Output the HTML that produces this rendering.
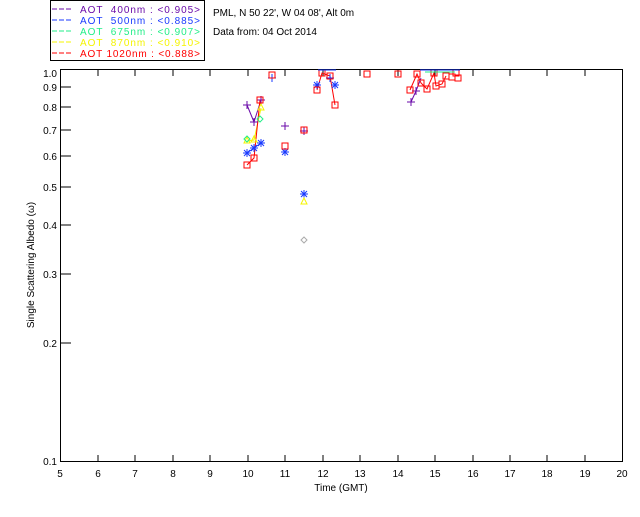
<!DOCTYPE html>
<html><head><meta charset="utf-8"><style>
html,body{margin:0;padding:0;background:#fff;}
svg text{font-family:"Liberation Sans",sans-serif;font-size:10px;}
</style></head><body>
<svg width="640" height="512" viewBox="0 0 640 512" xmlns="http://www.w3.org/2000/svg">
<rect width="640" height="512" fill="#fff"/>
<rect x="50.5" y="0.5" width="154" height="60" fill="none" stroke="#000"/>
<g font-size="10">
<line x1="52" y1="9" x2="73" y2="9" stroke="#6a0aa8" stroke-dasharray="5,2"/>
<text x="80" y="13" fill="#6a0aa8" xml:space="preserve" textLength="120">AOT  400nm : &lt;0.905&gt;</text>
<line x1="52" y1="20" x2="73" y2="20" stroke="#1a3aff" stroke-dasharray="5,2"/>
<text x="80" y="24" fill="#1a3aff" xml:space="preserve" textLength="120">AOT  500nm : &lt;0.885&gt;</text>
<line x1="52" y1="31" x2="73" y2="31" stroke="#22ee88" stroke-dasharray="5,2"/>
<text x="80" y="35" fill="#22ee88" xml:space="preserve" textLength="120">AOT  675nm : &lt;0.907&gt;</text>
<line x1="52" y1="42" x2="73" y2="42" stroke="#f4f400" stroke-dasharray="5,2"/>
<text x="80" y="46" fill="#f4f400" xml:space="preserve" textLength="120">AOT  870nm : &lt;0.910&gt;</text>
<line x1="52" y1="53" x2="73" y2="53" stroke="#f00" stroke-dasharray="5,2"/>
<text x="80" y="57" fill="#f00" xml:space="preserve" textLength="120">AOT 1020nm : &lt;0.888&gt;</text>
</g>
<text x="213" y="16">PML, N 50 22', W 04 08', Alt 0m</text>
<text x="213" y="35">Data from: 04 Oct 2014</text>
<rect x="60.5" y="69.5" width="562" height="392" fill="none" stroke="#000"/>
<g stroke="#000">
<line x1="98" y1="461" x2="98" y2="455"/><line x1="135" y1="461" x2="135" y2="455"/><line x1="173" y1="461" x2="173" y2="455"/><line x1="210" y1="461" x2="210" y2="455"/><line x1="248" y1="461" x2="248" y2="455"/><line x1="285" y1="461" x2="285" y2="455"/><line x1="323" y1="461" x2="323" y2="455"/><line x1="360" y1="461" x2="360" y2="455"/><line x1="398" y1="461" x2="398" y2="455"/><line x1="435" y1="461" x2="435" y2="455"/><line x1="473" y1="461" x2="473" y2="455"/><line x1="510" y1="461" x2="510" y2="455"/><line x1="547" y1="461" x2="547" y2="455"/><line x1="585" y1="461" x2="585" y2="455"/>
<line x1="98" y1="70" x2="98" y2="76"/><line x1="135" y1="70" x2="135" y2="76"/><line x1="173" y1="70" x2="173" y2="76"/><line x1="210" y1="70" x2="210" y2="76"/><line x1="248" y1="70" x2="248" y2="76"/><line x1="285" y1="70" x2="285" y2="76"/><line x1="323" y1="70" x2="323" y2="76"/><line x1="360" y1="70" x2="360" y2="76"/><line x1="398" y1="70" x2="398" y2="76"/><line x1="435" y1="70" x2="435" y2="76"/><line x1="473" y1="70" x2="473" y2="76"/><line x1="510" y1="70" x2="510" y2="76"/><line x1="547" y1="70" x2="547" y2="76"/><line x1="585" y1="70" x2="585" y2="76"/>
<line x1="60" y1="87" x2="71" y2="87"/><line x1="60" y1="107" x2="71" y2="107"/><line x1="60" y1="130" x2="71" y2="130"/><line x1="60" y1="156" x2="71" y2="156"/><line x1="60" y1="187" x2="71" y2="187"/><line x1="60" y1="225" x2="71" y2="225"/><line x1="60" y1="274" x2="71" y2="274"/><line x1="60" y1="343" x2="71" y2="343"/>
</g>
<g text-anchor="end">
<text x="57" y="77">1.0</text><text x="57" y="91">0.9</text><text x="57" y="111">0.8</text><text x="57" y="134">0.7</text><text x="57" y="160">0.6</text><text x="57" y="191">0.5</text><text x="57" y="229">0.4</text><text x="57" y="278">0.3</text><text x="57" y="347">0.2</text><text x="57" y="465">0.1</text>
</g>
<g text-anchor="middle">
<text x="60" y="477">5</text><text x="98" y="477">6</text><text x="135" y="477">7</text><text x="173" y="477">8</text><text x="210" y="477">9</text><text x="248" y="477">10</text><text x="285" y="477">11</text><text x="323" y="477">12</text><text x="360" y="477">13</text><text x="398" y="477">14</text><text x="435" y="477">15</text><text x="473" y="477">16</text><text x="510" y="477">17</text><text x="547" y="477">18</text><text x="585" y="477">19</text><text x="622" y="477">20</text>
<text x="341" y="491">Time (GMT)</text>
<text transform="translate(34,265) rotate(-90)">Single Scattering Albedo (ω)</text>
</g>
<g fill="none" stroke-width="1">
<polyline points="247,105 254,122 261,100" stroke="#6a0aa8"/>
<polyline points="247,153 254,148 261,143" stroke="#1a3aff"/>
<polyline points="247,141 254,140 261,108" stroke="#f4f400"/>
<polyline points="247,165 254,158 260,100" stroke="#f00"/>
<polyline points="317,90 322,73 330,76 335,105" stroke="#f00"/>
<polyline points="410,90 417,74 421,83 427,89 434,73 436,86 442,84 446,76" stroke="#f00"/>
<polyline points="411,102 416,91 421,78" stroke="#6a0aa8"/>
</g>
<g stroke="#6a0aa8">
<path d="M243 105h8M247 101v8M250 122h8M254 118v8M257 100h8M261 96v8M281 126h8M285 122v8M300 131h8M304 127v8M407 102h8M411 98v8M412 91h8M416 87v8"/>
</g>
<g stroke="#1a3aff">
<path d="M243 153h8M247 149v8M244 150l6 6M250 150l-6 6M250 148h8M254 144v8M251 145l6 6M257 145l-6 6M257 143h8M261 139v8M258 140l6 6M264 140l-6 6M281 152h8M285 148v8M282 149l6 6M288 149l-6 6M300 194h8M304 190v8M301 191l6 6M307 191l-6 6M313 85h8M317 81v8M314 82l6 6M320 82l-6 6M331 85h8M335 81v8M332 82l6 6M338 82l-6 6M268 78h8M272 74v8M326 78h8M330 74v8"/>
</g>
<g fill="none" stroke="#f4f400">
<path d="M247 137l3 6h-6zM254 136l3 6h-6zM261 104l3 6h-6zM304 198l3 6h-6z"/>
</g>
<g fill="none" stroke="#22ee88">
<path d="M247 136l3 3-3 3-3-3zM260 116l3 3-3 3-3-3z"/>
</g>
<path d="M304 237l3 3-3 3-3-3z" fill="none" stroke="#aaa"/>
<g fill="none" stroke="#f00">
<rect x="244" y="162" width="6" height="6"/><rect x="251" y="155" width="6" height="6"/><rect x="257" y="97" width="6" height="6"/><rect x="282" y="143" width="6" height="6"/><rect x="301" y="127" width="6" height="6"/><rect x="269" y="72" width="6" height="6"/>
<rect x="314" y="87" width="6" height="6"/><rect x="319" y="70" width="6" height="6"/><rect x="327" y="73" width="6" height="6"/><rect x="332" y="102" width="6" height="6"/><rect x="364" y="71" width="6" height="6"/><rect x="395" y="71" width="6" height="6"/>
<rect x="407" y="87" width="6" height="6"/><rect x="414" y="71" width="6" height="6"/><rect x="418" y="80" width="6" height="6"/><rect x="424" y="86" width="6" height="6"/><rect x="431" y="70" width="6" height="6"/><rect x="433" y="83" width="6" height="6"/><rect x="439" y="81" width="6" height="6"/><rect x="443" y="73" width="6" height="6"/><rect x="449" y="74" width="6" height="6"/><rect x="453" y="70" width="6" height="6"/><rect x="455" y="75" width="6" height="6"/>
</g>
<g stroke="#1a3aff"><path d="M420 70h40M318 70h18"/></g>
<g stroke="#22ee88"><path d="M425 72h30"/></g>
</svg>
</body></html>
